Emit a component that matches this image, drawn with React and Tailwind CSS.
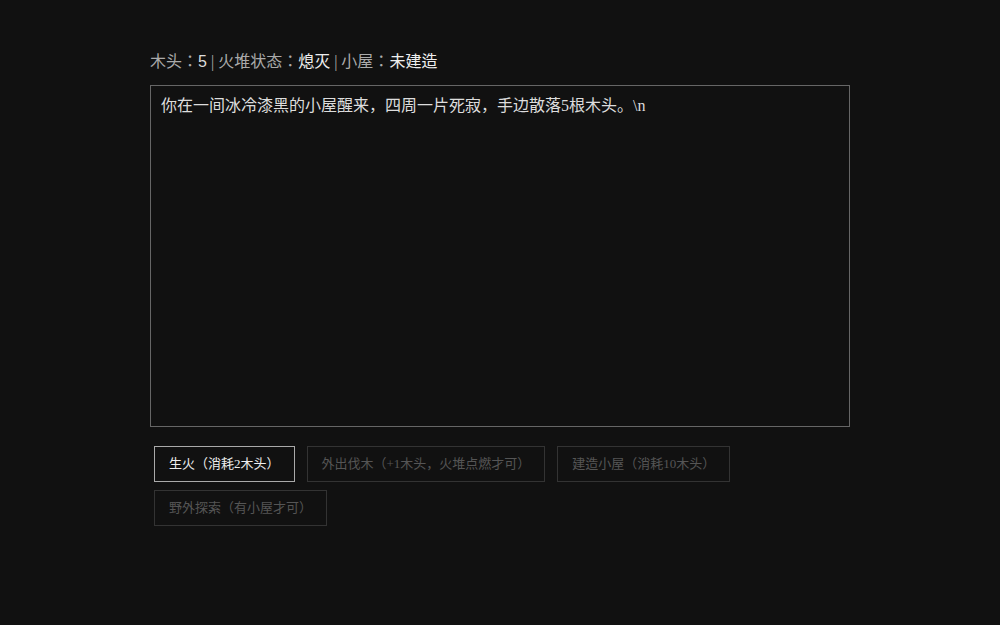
import React, { useState } from "react"

const font = {
  fontFamily: '"Liberation Serif", "Noto Sans CJK KR", serif',
}

export default function App() {
  const [wood] = useState(5)
  const [fire] = useState("熄灭")
  const [hut] = useState("未建造")
  const [log] = useState("你在一间冰冷漆黑的小屋醒来，四周一片死寂，手边散落5根木头。\\n")

  const actions = [
    { label: "生火（消耗2木头）", enabled: true },
    { label: "外出伐木（+1木头，火堆点燃才可）", enabled: false },
    { label: "建造小屋（消耗10木头）", enabled: false },
    { label: "野外探索（有小屋才可）", enabled: false },
  ]

  return (
    <div className="w-full h-[625px] bg-[#111111]" style={font}>
      <div className="w-[700px] mx-auto pt-[50px]">
        {/* Status */}
        <div className="h-6 leading-6 text-[16px] text-[#aaaaaa] mb-[11px]">
          木头：<span className="text-[#dddddd] font-['Liberation_Sans']">{wood}</span> | 火堆状态：
          <span className="text-[#eeeeee]">{fire}</span> | 小屋：
          <span className="text-[#eeeeee]">{hut}</span>
        </div>

        {/* Log */}
        <div className="h-[342px] border border-[#666666] p-[10px] text-[16px] leading-[20px] text-[#dddddd] whitespace-pre-wrap">
          {log}
        </div>

        {/* Actions */}
        <div className="flex flex-wrap gap-x-3 gap-y-2 pl-1 mt-[19px] w-[600px]">
          {actions.map((a) => (
            <button
              key={a.label}
              disabled={!a.enabled}
              className={`h-9 px-[14px] text-[13px] border ${
                a.enabled
                  ? "border-[#aaaaaa] text-[#eeeeee]"
                  : "border-[#333333] text-[#555555]"
              }`}
            >
              {a.label}
            </button>
          ))}
        </div>
      </div>
    </div>
  )
}
